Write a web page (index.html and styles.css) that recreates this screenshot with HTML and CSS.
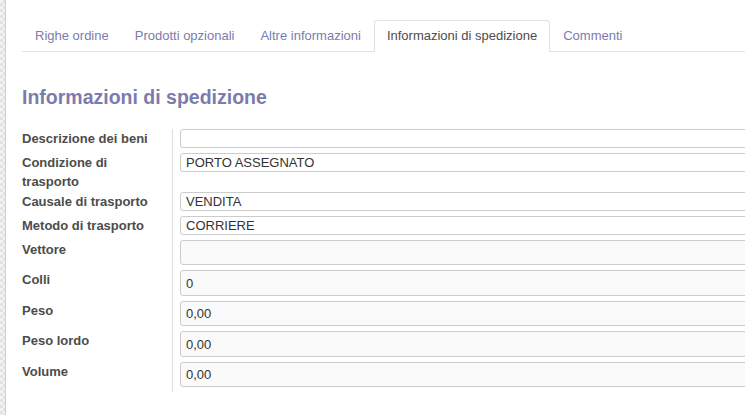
FILE: index.html
```html
<!DOCTYPE html>
<html lang="it">
<head>
<meta charset="utf-8">
<title>Informazioni di spedizione</title>
<link rel="stylesheet" href="styles.css">
</head>
<body>
<div class="page">
  <div class="edge"></div>
  <div class="sheet">
    <ul class="tabs">
      <li class="tab"><a class="tab-link">Righe ordine</a></li>
      <li class="tab"><a class="tab-link">Prodotti opzionali</a></li>
      <li class="tab"><a class="tab-link">Altre informazioni</a></li>
      <li class="tab"><a class="tab-link active">Informazioni di spedizione</a></li>
      <li class="tab"><a class="tab-link">Commenti</a></li>
    </ul>
    <h2 class="title">Informazioni di spedizione</h2>
    <div class="form">
      <label class="label">Descrizione dei beni</label>
      <div class="cell"><input class="field" type="text" value="" readonly></div>

      <label class="label">Condizione di trasporto</label>
      <div class="cell"><input class="field" type="text" value="PORTO ASSEGNATO" readonly></div>

      <label class="label">Causale di trasporto</label>
      <div class="cell"><input class="field" type="text" value="VENDITA" readonly></div>

      <label class="label">Metodo di trasporto</label>
      <div class="cell"><input class="field" type="text" value="CORRIERE" readonly></div>

      <label class="label">Vettore</label>
      <div class="cell"><input class="field tall" type="text" value="" readonly></div>

      <label class="label">Colli</label>
      <div class="cell"><input class="field tall" type="text" value="0" readonly></div>

      <label class="label">Peso</label>
      <div class="cell"><input class="field tall" type="text" value="0,00" readonly></div>

      <label class="label">Peso lordo</label>
      <div class="cell"><input class="field tall" type="text" value="0,00" readonly></div>

      <label class="label">Volume</label>
      <div class="cell"><input class="field tall" type="text" value="0,00" readonly></div>
    </div>
  </div>
</div>
</body>
</html>
```

FILE: styles.css
```css
html, body {
  margin: 0;
  padding: 0;
  background: #ffffff;
}

body {
  font-family: "Liberation Sans", Arial, sans-serif;
  font-size: 13px;
  line-height: 1.5;
  color: #4c4c4c;
  overflow: hidden;
  height: 415px;
}

.page {
  display: flex;
  height: 415px;
}

.edge {
  flex: 0 0 5px;
  border-right: 1px solid #cfcfcf;
  background-color: #f2f2f2;
  background-image: conic-gradient(#e3e3e3 25%, transparent 0 50%, #e3e3e3 0 75%, transparent 0);
  background-size: 6px 6px;
}

.sheet {
  flex: 1 1 auto;
  min-width: 0;
  padding-left: 16px;
  overflow: hidden;
}

.tabs {
  display: flex;
  list-style: none;
  margin: 20px 0 0 0;
  padding: 0;
  border-bottom: 1px solid #dee2e6;
}

.tab {
  margin-bottom: -1px;
}

.tab-link {
  display: block;
  padding: 5px 12px;
  border: 1px solid transparent;
  border-top-left-radius: 3px;
  border-top-right-radius: 3px;
  color: #7c7bad;
  white-space: nowrap;
}

.tab-link.active {
  color: #4c4c4c;
  background: #ffffff;
  border-color: #dee2e6 #dee2e6 #ffffff;
}

.title {
  margin: 34px 0 20px 0;
  font-size: 19.5px;
  line-height: 1.2;
  font-weight: bold;
  color: #7c7bad;
}

.form {
  display: grid;
  grid-template-columns: 151px 1fr;
  width: calc(100% + 40px);
}

.label {
  box-sizing: border-box;
  border-right: 1px solid #dddddd;
  padding-right: 10px;
  font-weight: bold;
  line-height: 19.5px;
  color: #4c4c4c;
}

.cell {
  padding: 0 0 5px 7px;
}

.field {
  display: block;
  box-sizing: border-box;
  width: 100%;
  height: 19px;
  margin: 0;
  padding: 0 5px;
  border: 1px solid #cccccc;
  border-radius: 3px;
  background: #ffffff;
  font-family: "Liberation Sans", Arial, sans-serif;
  font-size: 13px;
  color: #333333;
  outline: none;
}

.field.tall {
  height: 25.5px;
  padding: 2px 5px;
  background: #fafafa;
}
```
